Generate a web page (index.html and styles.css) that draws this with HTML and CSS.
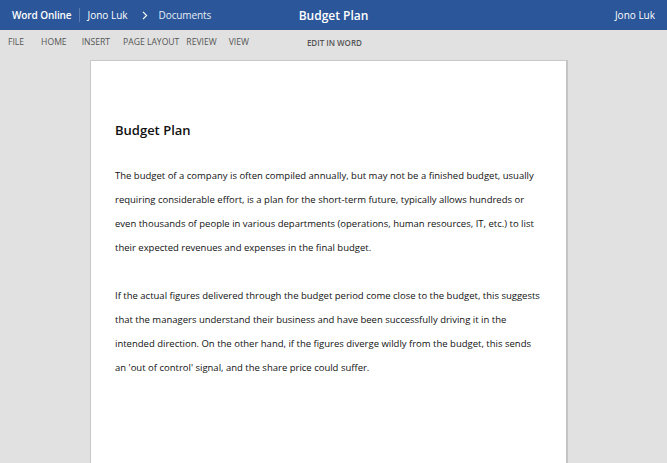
FILE: index.html
```html
<!DOCTYPE html>
<html>
<head>
<meta charset="utf-8">
<link rel="stylesheet" href="styles.css">
</head>
<body>
<header class="topbar">
  <div class="crumbs">
    <span class="app">Word Online</span>
    <span class="sep"></span>
    <span class="user-link">Jono Luk</span>
    <svg class="chev" width="6" height="9" viewBox="0 0 6 9"><path d="M1 0.8 L4.6 4.5 L1 8.2" fill="none" stroke="#fff" stroke-width="1.2"/></svg>
    <span class="folder">Documents</span>
  </div>
  <div class="doc-title">Budget Plan</div>
  <div class="account">Jono Luk</div>
</header>
<nav class="ribbon">
  <span class="tab t-file">FILE</span>
  <span class="tab t-home">HOME</span>
  <span class="tab t-insert">INSERT</span>
  <span class="tab t-layout">PAGE LAYOUT</span>
  <span class="tab t-review">REVIEW</span>
  <span class="tab t-view">VIEW</span>
  <span class="tab edit">EDIT IN WORD</span>
</nav>
<main class="canvas">
  <article class="page">
    <h1 class="title">Budget Plan</h1>
    <p class="para">The budget of a company is often compiled annually, but may not be a finished budget, usually requiring considerable effort, is a plan for the short-term future, typically allows hundreds or even thousands of people in various departments (operations, human resources, IT, etc.) to list their expected revenues and expenses in the final budget.</p>
    <p class="para">If the actual figures delivered through the budget period come close to the budget, this suggests that the managers understand their business and have been successfully driving it in the intended direction. On the other hand, if the figures diverge wildly from the budget, this sends an 'out of control' signal, and the share price could suffer.</p>
  </article>
</main>
</body>
</html>
```
FILE: styles.css
```css
html, body {
  margin: 0;
  padding: 0;
  height: 100%;
  overflow: hidden;
  background: #e1e1e1;
  font-family: "Open Sans", "Noto Sans", sans-serif;
}
body {
  display: flex;
  flex-direction: column;
}
.topbar {
  height: 30px;
  flex: none;
  background: #2b579a;
  color: #fff;
  display: flex;
  align-items: center;
  position: relative;
  padding: 0 12px;
  font-size: 10px;
}
.crumbs {
  display: flex;
  align-items: center;
}
.app {
  font-weight: 600;
  letter-spacing: -0.1px;
}
.sep {
  width: 1px;
  height: 14px;
  background: #5a7db5;
  margin: 0 8px 0 7px;
}
.chev {
  margin: 0 11px 0 14px;
}
.folder {
  color: #e8edf5;
  letter-spacing: -0.1px;
}
.doc-title {
  position: absolute;
  left: 0;
  right: 0;
  text-align: center;
  font-size: 12px;
  font-weight: 600;
  pointer-events: none;
}
.account {
  margin-left: auto;
}
.ribbon {
  height: 26px;
  flex: none;
  display: flex;
  align-items: center;
  padding: 0 0 2px 8px;
  box-sizing: border-box;
  font-size: 8.6px;
  color: #555;
}
.t-file { margin-right: 17px; }
.t-home { margin-right: 15px; }
.t-insert { margin-right: 13px; }
.t-layout { margin-right: 7px; }
.t-review { margin-right: 12px; }
.t-view { margin-right: 58px; }
.edit { font-weight: 600; color: #555; font-size: 8px; }
.canvas {
  flex: 1;
  min-height: 0;
  display: flex;
  padding-top: 4px;
  padding-left: 90px;
}
.page {
  width: 478px;
  box-sizing: border-box;
  background: #fff;
  border: 1px solid #c8c8c8;
  border-right: 2px solid #c4c4c4;
  border-bottom: none;
  padding: 56px 23px 0 24px;
}
.title {
  margin: 0 0 21px 0;
  font-size: 13px;
  font-weight: 600;
  color: #111;
  line-height: 26px;
}
.para {
  margin: 0 0 24px 0;
  font-size: 9.5px;
  line-height: 24px;
  color: #111;
}
```
